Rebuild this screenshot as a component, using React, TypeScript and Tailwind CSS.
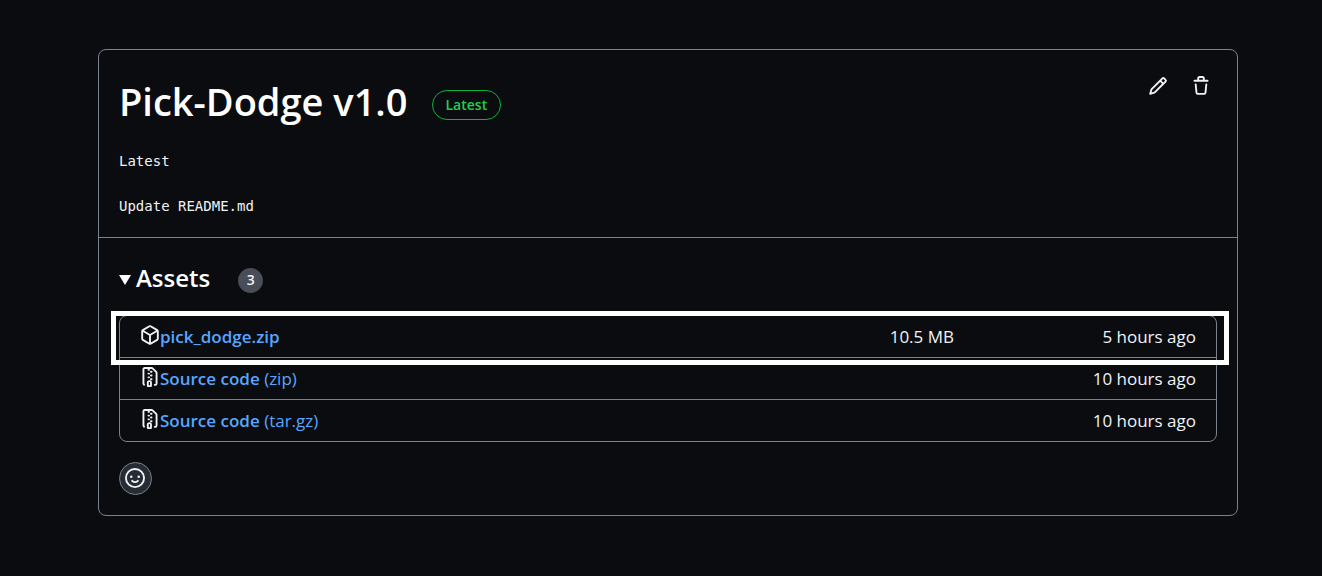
import type { ReactNode } from "react";

const paths = {
  pencil:
    "M11.013 1.427a1.75 1.75 0 0 1 2.474 0l1.086 1.086a1.75 1.75 0 0 1 0 2.474l-8.61 8.61c-.21.21-.47.364-.756.445l-3.251.93a.75.75 0 0 1-.927-.928l.929-3.25c.081-.286.235-.547.445-.758l8.61-8.61Zm.176 4.823L9.75 4.81l-6.286 6.287a.253.253 0 0 0-.064.108l-.558 1.953 1.953-.558a.253.253 0 0 0 .108-.064Zm1.238-3.763a.25.25 0 0 0-.354 0L10.811 3.75l1.439 1.44 1.263-1.263a.25.25 0 0 0 0-.354Z",
  trash:
    "M11 1.75V3h2.25a.75.75 0 0 1 0 1.5H2.75a.75.75 0 0 1 0-1.5H5V1.75C5 .784 5.784 0 6.75 0h2.5C10.216 0 11 .784 11 1.75ZM4.496 6.675l.66 6.6a.25.25 0 0 0 .249.225h5.19a.25.25 0 0 0 .249-.225l.66-6.6a.75.75 0 0 1 1.492.149l-.66 6.6A1.748 1.748 0 0 1 10.595 15h-5.19a1.75 1.75 0 0 1-1.741-1.575l-.66-6.6a.75.75 0 1 1 1.492-.15ZM6.5 1.75V3h3V1.75a.25.25 0 0 0-.25-.25h-2.5a.25.25 0 0 0-.25.25Z",
  package:
    "m8.878.392 5.25 3.045c.54.314.872.89.872 1.514v6.098a1.75 1.75 0 0 1-.872 1.514l-5.25 3.045a1.75 1.75 0 0 1-1.756 0l-5.25-3.045A1.75 1.75 0 0 1 1 11.049V4.951c0-.624.332-1.201.872-1.514L7.122.392a1.75 1.75 0 0 1 1.756 0ZM7.875 1.69l-4.63 2.685L8 7.133l4.755-2.758-4.63-2.685a.248.248 0 0 0-.25 0ZM2.5 5.677v5.372c0 .09.047.171.125.216l4.625 2.683V8.432Zm6.25 8.271 4.625-2.683a.25.25 0 0 0 .125-.216V5.677L8.75 8.432Z",
  fileZip:
    "M3.5 1.75v11.5c0 .09.048.173.126.217a.75.75 0 0 1-.752 1.298A1.748 1.748 0 0 1 2 13.25V1.75C2 .784 2.784 0 3.75 0h5.586c.464 0 .909.185 1.237.513l2.914 2.914c.329.328.513.773.513 1.237v8.586A1.75 1.75 0 0 1 12.25 15h-.5a.75.75 0 0 1 0-1.5h.5a.25.25 0 0 0 .25-.25V4.664a.25.25 0 0 0-.073-.177L9.513 1.573a.25.25 0 0 0-.177-.073H7.25a.75.75 0 0 1 0 1.5h-.5a.75.75 0 0 1 0-1.5h-3a.25.25 0 0 0-.25.25Zm3.75 8.75h.5c.966 0 1.75.784 1.75 1.75v3a.75.75 0 0 1-.75.75h-2.5a.75.75 0 0 1-.75-.75v-3c0-.966.784-1.75 1.75-1.75ZM6 5.25a.75.75 0 0 1 .75-.75h.5a.75.75 0 0 1 0 1.5h-.5A.75.75 0 0 1 6 5.25Zm.75 2.25h.5a.75.75 0 0 1 0 1.5h-.5a.75.75 0 0 1 0-1.5ZM8 6.75A.75.75 0 0 1 8.75 6h.5a.75.75 0 0 1 0 1.5h-.5A.75.75 0 0 1 8 6.75ZM8.75 3h.5a.75.75 0 0 1 0 1.5h-.5a.75.75 0 0 1 0-1.5ZM8 9.75A.75.75 0 0 1 8.75 9h.5a.75.75 0 0 1 0 1.5h-.5A.75.75 0 0 1 8 9.75Zm-1 2.5v2.25h1v-2.25a.25.25 0 0 0-.25-.25h-.5a.25.25 0 0 0-.25.25Z",
  smiley:
    "M8 0a8 8 0 1 1 0 16A8 8 0 0 1 8 0ZM1.5 8a6.5 6.5 0 1 0 13 0 6.5 6.5 0 0 0-13 0Zm3.82 1.636a.75.75 0 0 1 1.038.175l.007.009c.103.118.22.222.35.31.264.178.683.37 1.285.37.602 0 1.02-.192 1.285-.371.13-.088.247-.192.35-.31l.007-.008a.75.75 0 0 1 1.222.87l-.614-.43c.614.43.614.43.613.431v.001l-.001.002-.002.003-.005.007-.014.019a2.066 2.066 0 0 1-.184.213c-.16.166-.338.316-.53.445-.63.418-1.37.638-2.127.629-.946 0-1.652-.308-2.126-.63a3.331 3.331 0 0 1-.715-.657l-.014-.02-.005-.006-.002-.003v-.002h-.001l.613-.432-.614.43a.75.75 0 0 1 .183-1.044ZM12 7a1 1 0 1 1-2 0 1 1 0 0 1 2 0ZM5 8a1 1 0 1 1 0-2 1 1 0 0 1 0 2Z",
};

function Icon({ name }: { name: keyof typeof paths }) {
  return (
    <svg viewBox="0 0 16 16" className="size-5 shrink-0 fill-current" aria-hidden="true">
      <path d={paths[name]} />
    </svg>
  );
}

type Asset = {
  icon: keyof typeof paths;
  name: string;
  kind?: string;
  size?: string;
  age: string;
  highlighted?: boolean;
};

const assets: Asset[] = [
  { icon: "package", name: "pick_dodge.zip", size: "10.5 MB", age: "5 hours ago", highlighted: true },
  { icon: "fileZip", name: "Source code", kind: "(zip)", age: "10 hours ago" },
  { icon: "fileZip", name: "Source code", kind: "(tar.gz)", age: "10 hours ago" },
];

function AssetRow({ asset }: { asset: Asset }) {
  return (
    <li className="relative flex items-center border-b border-[#7a828e] px-5 py-2 text-[17px] leading-[25px] last:border-b-0">
      <span className="pb-1">
        <Icon name={asset.icon} />
      </span>
      <a href="#" className="flex-1 text-[#58a6ff]">
        <span className="font-semibold">{asset.name}</span>
        {asset.kind && <span> {asset.kind}</span>}
      </a>
      {asset.size && <span>{asset.size}</span>}
      <span className="w-[242px] text-right">{asset.age}</span>
      {asset.highlighted && (
        <span className="pointer-events-none absolute -top-[5px] -right-[13px] -bottom-2 -left-[9px] border-[5px] border-white" />
      )}
    </li>
  );
}

function IconButton({ label, children }: { label: string; children: ReactNode }) {
  return (
    <button type="button" aria-label={label} className="flex size-5 items-center justify-center">
      {children}
    </button>
  );
}

export default function App() {
  return (
    <main className="min-h-screen bg-[#0a0c10] pt-[49px] pr-[84px] pb-[60px] pl-[98px] font-['Open_Sans','Noto_Sans',sans-serif] text-[#f0f3f6]">
      <article className="rounded-lg border border-[#7a828e]">
        <header className="border-b border-[#7a828e] p-5">
          <div className="flex items-start justify-between pt-[6px]">
            <div className="flex items-end gap-6">
              <h1 className="text-[38px] leading-[50px] font-semibold text-white">Pick-Dodge v1.0</h1>
              <span className="mb-[6px] rounded-full border border-[#09b43a] px-[13px] text-[14px] leading-7 font-semibold text-[#26cd4d]">
                Latest
              </span>
            </div>
            <div className="flex gap-[23px] pr-[6px]">
              <IconButton label="Edit release">
                <Icon name="pencil" />
              </IconButton>
              <IconButton label="Delete release">
                <Icon name="trash" />
              </IconButton>
            </div>
          </div>
          <div className="mt-[25px] mb-px flex flex-col gap-[25px] font-['DejaVu_Sans_Mono',monospace] text-[14px] leading-5">
            <p>Latest</p>
            <p>Update README.md</p>
          </div>
        </header>
        <section className="p-5">
          <details open>
            <summary className="mb-[17px] flex list-none items-center leading-10">
              <svg viewBox="0 0 12 10" className="mt-1 mr-[5px] h-[10px] w-3 fill-white" aria-hidden="true">
                <path d="M0 0h12L6 10Z" />
              </svg>
              <h2 className="mr-7 text-[24px] font-semibold text-white">Assets</h2>
              <span className="mt-1 flex size-[25px] items-center justify-center rounded-full bg-[#484d57] text-[14px] font-semibold">
                3
              </span>
            </summary>
            <ul className="rounded-lg border border-[#7a828e]">
              {assets.map((asset) => (
                <AssetRow key={asset.name + (asset.kind ?? "")} asset={asset} />
              ))}
            </ul>
          </details>
          <button
            type="button"
            aria-label="Add a reaction"
            className="mt-5 flex size-[33px] items-center justify-center rounded-full border border-[#7a828e] bg-[#272b33] pr-px pb-px"
          >
            <Icon name="smiley" />
          </button>
        </section>
      </article>
    </main>
  );
}
